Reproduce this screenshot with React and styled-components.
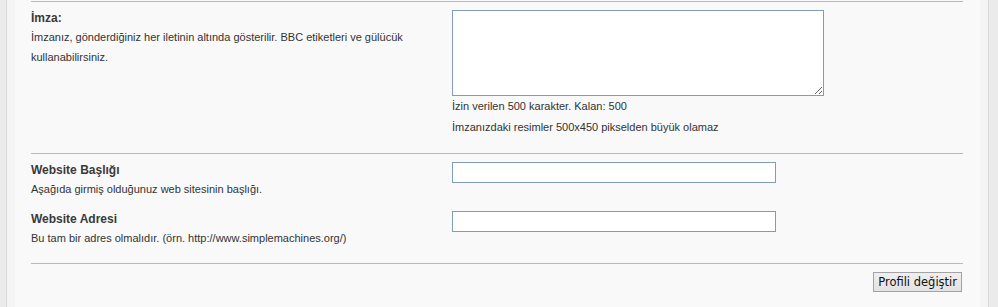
import styled, { createGlobalStyle } from 'styled-components';

const GlobalStyle = createGlobalStyle`
  html, body {
    margin: 0;
    padding: 0;
    background: #ebebeb;
  }
  body {
    font-family: "Liberation Sans", Arial, sans-serif;
  }
`;

const Page = styled.div`
  padding: 0 9px 0 6px;
  background: #ebebeb;
`;

const Frame = styled.div`
  border-left: 1px solid #d9d9d9;
  border-right: 1px solid #d9d9d9;
  background: #f4f4f4;
  padding: 0 8px;
`;

const Panel = styled.div`
  background: #f9f9f9;
  height: 307px;
  padding: 1px 17px 0 16px;
  box-sizing: border-box;
`;

const Rule = styled.hr`
  margin: 0;
  border: 0;
  border-top: 1px solid #b9b9b9;
  height: 0;
`;

const Section = styled.div`
  display: grid;
  grid-template-columns: 421px 1fr;
  row-gap: 12px;
  padding: 8px 0 ${props => props.bottom}px;
`;

const Term = styled.div`
  color: #333;
`;

const Label = styled.div`
  font-size: 12px;
  font-weight: bold;
  line-height: 17px;
  color: #3a3a3a;
`;

const Hint = styled.div`
  font-size: 11px;
  line-height: 20px;
  color: #333;
  max-width: 380px;
`;

const Field = styled.div`
  display: flex;
  flex-direction: column;
  align-items: flex-start;
`;

const TextArea = styled.textarea`
  width: 372px;
  height: 86px;
  box-sizing: border-box;
  border: 1px solid #7f9db9;
  background: #fff;
  margin: 0;
  padding: 2px;
  display: block;
`;

const TextInput = styled.input`
  width: 324px;
  height: 21px;
  box-sizing: border-box;
  border: 1px solid #7f9db9;
  background: #fff;
  margin: 0;
  padding: 1px 3px;
  display: block;
`;

const Note = styled.div`
  font-size: 11px;
  line-height: 21px;
  color: #333;
`;

const Actions = styled.div`
  display: flex;
  justify-content: flex-end;
  padding: 8px 1px 0 0;
`;

const Button = styled.button`
  font-family: "DejaVu Sans", Verdana, sans-serif;
  font-size: 11.5px;
  height: 20px;
  padding: 0 4px;
  margin: 0;
  color: #111;
  background: linear-gradient(#efefef, #e2e2e2);
  border: 1px solid #a3a3a3;
  border-radius: 0;
  line-height: 18px;
`;

export default function App() {
  return (
    <>
      <GlobalStyle />
      <Page>
        <Frame>
          <Panel>
            <Rule />
            <Section bottom={15}>
              <Term>
                <Label>İmza:</Label>
                <Hint>
                  İmzanız, gönderdiğiniz her iletinin altında gösterilir. BBC etiketleri ve gülücük kullanabilirsiniz.
                </Hint>
              </Term>
              <Field>
                <TextArea />
                <Note>İzin verilen 500 karakter. Kalan: 500</Note>
                <Note>İmzanızdaki resimler 500x450 pikselden büyük olamaz</Note>
              </Field>
            </Section>
            <Rule />
            <Section bottom={15}>
              <Term>
                <Label>Website Başlığı</Label>
                <Hint>Aşağıda girmiş olduğunuz web sitesinin başlığı.</Hint>
              </Term>
              <Field>
                <TextInput type="text" />
              </Field>
              <Term>
                <Label>Website Adresi</Label>
                <Hint>Bu tam bir adres olmalıdır. (örn. http://www.simplemachines.org/)</Hint>
              </Term>
              <Field>
                <TextInput type="text" />
              </Field>
            </Section>
            <Rule />
            <Actions>
              <Button type="button">Profili değiştir</Button>
            </Actions>
          </Panel>
        </Frame>
      </Page>
    </>
  );
}
